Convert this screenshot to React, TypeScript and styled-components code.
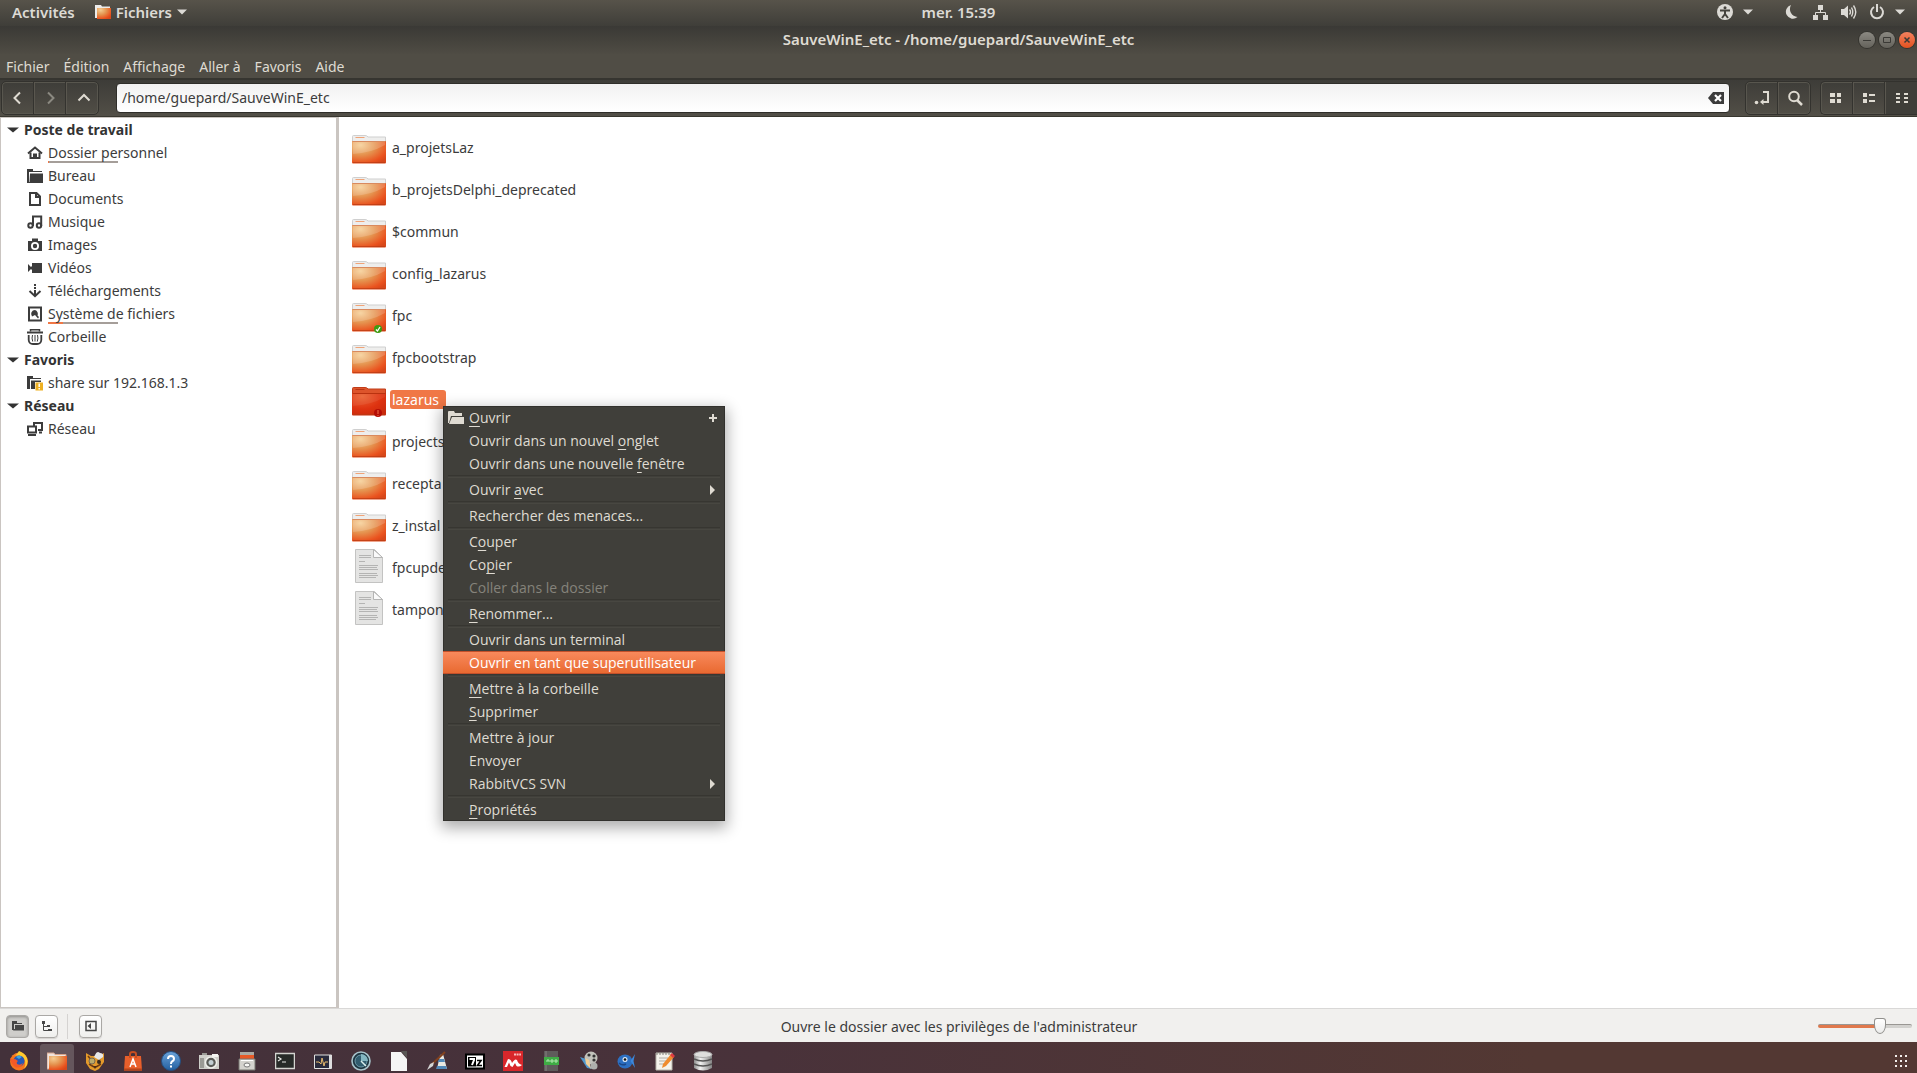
import React, { useState } from "react";
import styled, { createGlobalStyle, css } from "styled-components";

const Global = createGlobalStyle`
  * { box-sizing: border-box; }
  html, body, #root { height: 100%; margin: 0; }
  body {
    overflow: hidden;
    background: #fff;
    color: #3c3c3c;
    font: 14px/23px "Noto Sans", "Open Sans", sans-serif;
  }
  button, input { font: inherit; color: inherit; }
  button { margin: 0; padding: 0; border: 0; background: none; text-align: left; }
  svg { display: block; flex: none; }
  ul { list-style: none; margin: 0; padding: 0; }
`;

const Screen = styled.div`
  height: 100vh;
  display: flex;
  flex-direction: column;
`;

/* ---------- top panel ---------- */
const TopPanel = styled.header`
  height: 26px;
  flex: none;
  display: grid;
  grid-template-columns: 1fr auto 1fr;
  align-items: center;
  padding: 0 12px 2px;
  color: #dcdad5;
  background: linear-gradient(#57534a, #3f3e39);
`;
const PanelGroup = styled.div<{ $end?: boolean }>`
  display: flex;
  align-items: center;
  gap: ${(p) => (p.$end ? 32 : 20)}px;
  justify-content: ${(p) => (p.$end ? "flex-end" : "flex-start")};
`;
const PanelButton = styled.button<{ $gap?: number }>`
  display: flex;
  align-items: center;
  gap: ${(p) => p.$gap ?? 5}px;
  font-size: 15px;
  font-weight: 600;
`;
const Indicators = styled.span`
  display: flex;
  gap: 12px;
`;

/* ---------- window chrome ---------- */
const TitleBar = styled.div`
  height: 28px;
  flex: none;
  display: grid;
  grid-template-columns: 1fr auto 1fr;
  align-items: center;
  padding: 0 2px;
  color: #dfdbd2;
  background: linear-gradient(#3a3935, #4f4c44);
`;
const Title = styled.h1`
  grid-column: 2;
  margin: 0;
  padding-bottom: 2px;
  font-size: 15px;
  font-weight: 600;
`;
const WindowButtons = styled.div`
  display: flex;
  justify-content: flex-end;
  gap: 4px;
`;
const WindowButton = styled.button<{ $close?: boolean }>`
  width: 16px;
  height: 16px;
  border-radius: 8px;
  display: grid;
  place-items: center;
  color: #3b3a36;
  box-shadow: 0 0 0 1px #35342f;
  background: ${(p) => (p.$close ? "linear-gradient(#f4825f, #e2511f)" : "linear-gradient(#8c8a83, #64625b)")};
`;
const MenuBar = styled.nav`
  height: 24px;
  flex: none;
  display: flex;
  align-items: center;
  gap: 14px;
  padding: 0 6px;
  color: #dfdbd2;
  background: #504d45;
`;
const ToolBar = styled.div`
  height: 39px;
  flex: none;
  display: flex;
  align-items: center;
  padding: 0 0 1px 1px;
  border-top: 2px solid #363530;
  border-bottom: 1px solid #38372f;
  background: linear-gradient(#3d3c38, #524f47);
`;
const ToolGroup = styled.div<{ $open?: boolean }>`
  display: flex;
  height: 34px;
  border: 1px solid #33322e;
  border-radius: 5px;
  box-shadow: inset 0 0 0 1px #58564e;
  ${(p) => p.$open && css`border-right: 0; border-radius: 5px 0 0 5px;`}
`;
const ToolButton = styled.button<{ $active?: boolean }>`
  width: 32px;
  display: grid;
  place-items: center;
  color: #dfdbd2;
  background: ${(p) => (p.$active ? "#3f3e39" : "none")};
  & + & { border-left: 1px solid #5a574f; box-shadow: -1px 0 #34332f; }
  &:disabled { color: #8b8981; }
`;
const Location = styled.div`
  flex: 1;
  height: 30px;
  margin: 0 15px 0 17px;
  display: flex;
  align-items: center;
  padding: 0 5px;
  border: 1px solid #2f2e2a;
  border-radius: 4px;
  background: linear-gradient(#f1f1f1, #fff);
`;
const LocationInput = styled.input`
  flex: 1;
  min-width: 0;
  padding: 0;
  border: 0;
  outline: 0;
  background: none;
`;
const Spacer = styled.div`
  width: 9px;
`;

/* ---------- content ---------- */
const Content = styled.div`
  flex: 1;
  min-height: 0;
  display: flex;
`;
const SideBar = styled.aside`
  width: 339px;
  flex: none;
  border: solid #cac5c1;
  border-width: 1px 3px 1px 1px;
`;
const SectionButton = styled.button`
  width: 100%;
  height: 23px;
  display: flex;
  align-items: center;
  gap: 5px;
  padding-left: 6px;
  font-weight: 700;
  color: #333;
`;
const Place = styled.a`
  height: 23px;
  display: flex;
  align-items: center;
  gap: 5px;
  padding-left: 26px;
  color: #3c3c3c;
  text-decoration: none;
`;
const PlaceLabel = styled.span<{ $used?: number }>`
  ${(p) =>
    p.$used !== undefined &&
    css`
      background: linear-gradient(90deg, #f07746 ${p.$used}px, #a59e99 ${p.$used}px) left 0 bottom 1px / 70px 2px no-repeat;
    `}
`;
const Files = styled.main`
  flex: 1;
  padding: 9px 13px;
`;
const FileRow = styled.li`
  height: 42px;
  display: flex;
  align-items: center;
  gap: 4px;
`;
const FileLabel = styled.button<{ $selected?: boolean }>`
  line-height: 19px;
  padding: 0 7px 0 2px;
  border-radius: 3px;
  ${(p) => p.$selected && css`background: #f07746; color: #fff;`}
`;

/* ---------- context menu ---------- */
const ContextMenu = styled.ul`
  position: absolute;
  left: 443px;
  top: 406px;
  width: 282px;
  font-family: "Open Sans", "Noto Sans", sans-serif;
  color: #dfdbd2;
  background: #403f3a;
  box-shadow: inset 0 0 0 1px #32312d, 0 5px 14px 2px rgba(0, 0, 0, 0.32);
`;
const MenuItem = styled.button<{ $active?: boolean }>`
  width: 100%;
  height: 23px;
  display: grid;
  grid-template-columns: 16px 1fr auto;
  align-items: center;
  gap: 5px;
  padding: 0 8px 0 5px;
  u { text-underline-offset: 3px; }
  &:disabled { color: #85837b; }
  ${(p) =>
    p.$active &&
    css`
      color: #fff;
      background: linear-gradient(#f98b5e, #e8682f);
      box-shadow: inset 0 1px #c3502a, inset 0 -1px #c3502a;
    `}
`;
const MenuLine = styled.li`
  height: 3px;
  margin: 0 5px;
  border-top: 1px solid #373631;
  border-bottom: 1px solid #484741;
`;

/* ---------- status bar ---------- */
const StatusBar = styled.footer`
  height: 34px;
  flex: none;
  display: grid;
  grid-template-columns: 1fr auto 1fr;
  align-items: center;
  padding: 1px 5px 0 6px;
  border-top: 1px solid #d9d8d7;
  background: #f1f0ee;
`;
const StatusTools = styled.div`
  display: flex;
  align-items: center;
  gap: 6px;
`;
const StatusButton = styled.button<{ $pressed?: boolean }>`
  width: 23px;
  height: 23px;
  display: grid;
  place-items: center;
  border: 1px solid #aaa8a5;
  border-radius: 4px;
  color: #464646;
  background: ${(p) => (p.$pressed ? "#cfcecb" : "linear-gradient(#fff, #efefed)")};
  box-shadow: ${(p) => (p.$pressed ? "inset 0 1px 3px #8d8c89" : "0 1px 1px #d4d2d0")};
`;
const StatusDivider = styled.div`
  width: 1px;
  height: 25px;
  margin: 0 5px 0 3px;
  background: #d5d3d1;
`;
const Zoom = styled.input`
  appearance: none;
  justify-self: end;
  width: 94px;
  height: 18px;
  margin: 0;
  background: none;
  &::-webkit-slider-runnable-track {
    height: 4px;
    border-radius: 2px;
    border-top: 1px solid #999793;
    background: linear-gradient(90deg, #e0784c 65%, #d2d1ce 65%);
  }
  &::-webkit-slider-thumb {
    appearance: none;
    width: 12px;
    height: 16px;
    margin-top: -7px;
    border: 1px solid #91908d;
    border-radius: 3px 3px 6px 6px / 3px 3px 9px 9px;
    background: linear-gradient(#fff, #ececeb);
  }
`;

/* ---------- dock ---------- */
const Dock = styled.nav`
  height: 31px;
  flex: none;
  display: flex;
  align-items: stretch;
  gap: 4px;
  padding: 2px 8px 0 2px;
  background: linear-gradient(90deg, #43313a, #49323a 40%, #533833 80%, #533833);
`;
const DockButton = styled.button<{ $active?: boolean; $last?: boolean }>`
  width: ${(p) => (p.$last ? 16 : 34)}px;
  margin-left: ${(p) => (p.$last ? "auto" : 0)};
  display: grid;
  place-items: center;
  padding-top: 4px;
  border-radius: 3px 3px 0 0;
  background: ${(p) => (p.$active ? "#65565c" : "none")};
`;

/* ---------- drawings ---------- */
const Caret = ({ w = 10 }: { w?: number }) => (
  <svg width={w} height="6" viewBox="0 0 10 6" preserveAspectRatio="none">
    <path d="M0 0.5H10L5 5.5Z" fill="currentColor" />
  </svg>
);

const SharedGradients = () => (
  <svg width="0" height="0" style={{ position: "absolute" }} aria-hidden="true">
    <defs>
      <radialGradient id="folder" cx="0.25" cy="0.18" r="0.95">
        <stop offset="0" stopColor="#f5cd92" />
        <stop offset="0.45" stopColor="#e59450" />
        <stop offset="0.85" stopColor="#ea521e" />
        <stop offset="1" stopColor="#d8481a" />
      </radialGradient>
      <radialGradient id="folderRed" cx="0.3" cy="0.15" r="0.95">
        <stop offset="0" stopColor="#ea6232" />
        <stop offset="0.6" stopColor="#de3210" />
        <stop offset="1" stopColor="#c82a0d" />
      </radialGradient>
      <linearGradient id="metal" x1="0" x2="1">
        <stop offset="0" stopColor="#8d8d8d" />
        <stop offset="0.35" stopColor="#f2f2f2" />
        <stop offset="1" stopColor="#858585" />
      </linearGradient>
      <linearGradient id="blue" x1="0" y1="0" x2="0" y2="1">
        <stop offset="0" stopColor="#6ba3da" />
        <stop offset="1" stopColor="#235f9f" />
      </linearGradient>
    </defs>
  </svg>
);

type Badge = "ok" | "alert";
const FolderIcon = ({ badge }: { badge?: Badge }) => {
  const red = badge === "alert";
  return (
    <svg width="34" height="36" viewBox="0 -6 34 36">
      <path d="M.5 8V1.5Q.5.5 1.5.5H13Q15 .5 16 2H33.5V8Z" fill={red ? "#dd542b" : "#eeeeed"} stroke={red ? "#c13c19" : "#cfcfcf"} />
      <path d="M3.500 2.500H12.500" stroke={red ? "#b93312" : "#f0a377"} />
      <path d="M0 6H34V27.500Q34 28.500 33 28.500H1Q0 28.500 0 27.500Z" fill={red ? "url(#folderRed)" : "url(#folder)"} />
      <path d="M1 7H33V10Q19 18 1 19Z" fill="#fff" opacity={red ? 0.07 : 0.17} />
      <path d="M1 27.500H33" stroke="#b83b14" opacity="0.7" />
      <path d="M.5 6.500H33.500" stroke={red ? "#b9320f" : "#d98a5f"} />
      {badge === "ok" && (
        <>
          <circle cx="26" cy="26" r="4" fill="#3f9b12" />
          <path d="M24 26.500L25.500 28L28 24" stroke="#fff" strokeWidth="1.300" fill="none" />
        </>
      )}
      {badge === "alert" && (
        <>
          <circle cx="26" cy="26" r="4" fill="#b50d05" />
          <path d="M26 23V27M26 28V29" stroke="#e66040" strokeWidth="1.200" />
        </>
      )}
    </svg>
  );
};

const TextFileIcon = () => (
  <svg width="34" height="36" viewBox="0 0 34 36">
    <path d="M3.500.5H22.500L30.500 8.500V33.500H3.500Z" fill="#e4e4e3" stroke="#c3c3c2" />
    <path d="M21.500.5V8.500H30.500Z" fill="#fafafa" stroke="#b5b5b4" />
    <path d="M7 6.500H19M7 8.500H19M7 12.500H13M7 16.500H26M7 18.500H25M7 20.500H26M7 24.500H25M7 26.500H26M7 28.500H24" stroke="#b4b4b3" />
  </svg>
);

const Ico = ({ children }: { children: React.ReactNode }) => (
  <svg width="16" height="16" viewBox="0 0 16 16" fill="currentColor">{children}</svg>
);
const line = { fill: "none", stroke: "currentColor", strokeWidth: 2 };

const placeIcons: Record<string, React.ReactNode> = {
  home: <><path d="M1 8.500L8 2.500L15 8.500" {...line} /><path d="M3.500 7.500V13H7V9.500H9V13H12.500V7.500" {...line} /></>,
  folder: <><path d="M0 1H6V3H15V4H0Z" /><path d="M0 1H2V15H0ZM3 5.500H16V15H0V14H2.500Z" /></>,
  doc: <path d="M3 2H9.500L13 5.500V14H3ZM9 2V6H13" {...line} />,
  music: <><circle cx="3.500" cy="11.500" r="2.200" {...line} /><circle cx="12" cy="11.500" r="2.200" {...line} /><path d="M6 12V2.500H14.200V12" {...line} /></>,
  camera: <path fillRule="evenodd" d="M5 1.500H11V4H15V14H1V4H5ZM8 5A4 4 0 1 0 8 13A4 4 0 1 0 8 5ZM8 6.800A2.200 2.200 0 1 1 8 11.200A2.200 2.200 0 1 1 8 6.800Z" />,
  video: <path d="M5 3H15V13H5V10L4 9L1 12V4L4 7L5 6Z" />,
  down: <><path d="M8 1V3M8 4V6M8 7V12" {...line} /><path d="M2.500 8L8 13.200L13.500 8" {...line} /></>,
  disk: <><path d="M2 1.500H14V14.500H2Z" {...line} /><path d="M8 4A4 4 0 0 0 5 10.500L8 9L11 12.500L12 11L10.500 9.500A4 4 0 0 0 8 4Z" /></>,
  trash: <><path d="M3.500 2.500V.8H12.500V2.500" {...line} strokeWidth={1.5} /><path d="M0 3.500H16" {...line} /><path d="M1.700 6V11Q2 15 6 15H10Q14 15 14.300 11V6" {...line} strokeWidth={1.8} /><path d="M5.500 6Q4.500 9 5.700 12.500M8 6V12.500M10.500 6Q11.500 9 10.300 12.500" {...line} strokeWidth={1} /></>,
  share: <><path d="M0 1H6V3H14V4H3V14H0Z" /><path d="M4 5.500H14V7H8V14H4Z" /><path d="M8.500 7.500H16V15.500H8.500Z" fill="#eeb021" /><path d="M12.200 8.500V12M12.200 13V14.500" stroke="#fff" strokeWidth="1.500" /></>,
  network: <><path d="M7 5V2H15V9H11" {...line} /><path d="M1 5.500H9V11.500H1ZM1 14H9M12 11.500H15" {...line} /></>,
};

/* ---------- data ---------- */
type PlaceData = { name: string; icon: string; used?: number };
const sections: { name: string; places: PlaceData[] }[] = [
  {
    name: "Poste de travail",
    places: [
      { name: "Dossier personnel", icon: "home", used: 1 },
      { name: "Bureau", icon: "folder" },
      { name: "Documents", icon: "doc" },
      { name: "Musique", icon: "music" },
      { name: "Images", icon: "camera" },
      { name: "Vidéos", icon: "video" },
      { name: "Téléchargements", icon: "down" },
      { name: "Système de fichiers", icon: "disk", used: 15 },
      { name: "Corbeille", icon: "trash" },
    ],
  },
  { name: "Favoris", places: [{ name: "share sur 192.168.1.3", icon: "share" }] },
  { name: "Réseau", places: [{ name: "Réseau", icon: "network" }] },
];

const files: { name: string; text?: boolean; badge?: Badge; selected?: boolean }[] = [
  { name: "a_projetsLaz" },
  { name: "b_projetsDelphi_deprecated" },
  { name: "$commun" },
  { name: "config_lazarus" },
  { name: "fpc", badge: "ok" },
  { name: "fpcbootstrap" },
  { name: "lazarus", badge: "alert", selected: true },
  { name: "projects" },
  { name: "recepta" },
  { name: "z_instal" },
  { name: "fpcupde", text: true },
  { name: "tampon", text: true },
];

/* An underscore goes before the letter that is the shortcut; null is a separator. */
type Entry = { label: string; kind?: "open" | "sub"; active?: boolean; disabled?: boolean } | null;
const entries: Entry[] = [
  { label: "_Ouvrir", kind: "open" },
  { label: "Ouvrir dans un nouvel _onglet" },
  { label: "Ouvrir dans une nouvelle _fenêtre" },
  null,
  { label: "Ouvrir _avec", kind: "sub" },
  null,
  { label: "Rechercher des menaces..." },
  null,
  { label: "C_ouper" },
  { label: "Co_pier" },
  { label: "Coller dans le dossier", disabled: true },
  null,
  { label: "_Renommer..." },
  null,
  { label: "Ouvrir dans un terminal" },
  { label: "Ouvrir en tant que superutilisateur", active: true },
  null,
  { label: "_Mettre à la corbeille" },
  { label: "_Supprimer" },
  null,
  { label: "Mettre à jour" },
  { label: "Envoyer" },
  { label: "RabbitVCS SVN", kind: "sub" },
  null,
  { label: "_Propriétés" },
];

const Mnemonic = ({ text }: { text: string }) => {
  const at = text.indexOf("_");
  if (at < 0) return <span>{text}</span>;
  return <span>{text.slice(0, at)}<u>{text[at + 1]}</u>{text.slice(at + 2)}</span>;
};

const dockApps: { name: string; art: React.ReactNode }[] = [
  { name: "Firefox", art: <><circle cx="10" cy="10.500" r="9" fill="#f5741c" /><path d="M3 4Q6 5 8 3L10 0Q16 2 18 7Q20 13 15 18Q19 9 12 5Z" fill="#ffcb2f" /><circle cx="10" cy="10" r="5.500" fill="#2859b5" /><path d="M1 7Q3 9 6 8L9 10Q7 11 8 13Q11 15 14 12Q12 18 6 16Q2 13 1 7Z" fill="#f35a27" /><path d="M7 6Q10 3 13 6L10 8Z" fill="#3ba4df" /></> },
  { name: "Fichiers", art: <><path d="M0 2H7L8 3.500H19V18H0Z" fill="#f0e5de" stroke="#d6a48b" /><path d="M2 5H20V19H2Z" fill="url(#folder)" /></> },
  { name: "Chat", art: <><path d="M1 2L6 5H14L19 2V11L14 18L10 20L5 18L1 12Z" fill="#e49a2b" /><path d="M3 5L7 10M17 5L13 10M4 13L9 16M16 13L11 16" stroke="#6f3c12" strokeWidth="1.500" /><path d="M10 4Q12-1 15 2Q19 2 18 6L14 9L9 6Z" fill="#e8e8e8" /><circle cx="7" cy="10" r="3" fill="#b9a96a" stroke="#746854" /><circle cx="14" cy="11" r="2" fill="#382b21" /><path d="M8 15H12L10 18Z" fill="#4a2a15" /></> },
  { name: "Logiciels", art: <><path d="M2 5H18L19 19.500H1Z" fill="#e95f2b" /><path d="M7 7V3Q7 1 10 1T13 3V7" fill="none" stroke="#c84e20" strokeWidth="2" /><path d="M1 18.500H19" stroke="#b7441a" strokeWidth="2" /><path d="M7 16L10 8L13 16M8 13H12" fill="none" stroke="#fff" strokeWidth="1.500" /></> },
  { name: "Aide", art: <><circle cx="10" cy="10" r="9.500" fill="url(#blue)" stroke="#254f80" /><path d="M7 8Q7 5 10 5T13 8Q13 9.500 11 10.500Q10 11 10 13M10 14.500V16.500" fill="none" stroke="#fff" strokeWidth="2" /></> },
  { name: "Capture", art: <><path d="M0 4H20V18H0Z" fill="#cfcfca" /><path d="M3 2H8V4H3ZM1 7H5V17H1Z" fill="#9a9a95" /><path d="M13 3H19V6H13Z" fill="#f4f4f1" /><circle cx="12" cy="11.500" r="5.500" fill="#5a5b57" stroke="#efefeb" strokeWidth="1.500" /><circle cx="12" cy="11.500" r="2.500" fill="#c3cfd3" /></> },
  { name: "Archives", art: <><path d="M3 1H17V8H3Z" fill="#a9a9a3" /><path d="M3 4H17V8H3Z" fill="#e85926" /><path d="M2 8H18V19H2Z" fill="#d4d3ce" stroke="#777670" /><path d="M4 9H16V10H4Z" fill="#fff" /><ellipse cx="10" cy="14" rx="3" ry="2" fill="#f8f8f5" stroke="#777" /></> },
  { name: "Terminal", art: <><path d="M.5 2.500H19.500V17.500H.5Z" fill="#272a28" stroke="#d4d4d0" strokeWidth="1.500" /><path d="M3 6L6 8L3 10M7 11H11" fill="none" stroke="#e8e8e5" strokeWidth="1.200" /></> },
  { name: "Moniteur", art: <><path d="M1.500 4H18.500V17.500H1.500Z" fill="#292a3b" stroke="#e0e0df" /><path d="M16 4H19V17H16Z" fill="#dedede" /><path d="M3 11H6L8 13L9 7L11 15L12 11H15" fill="none" stroke="#e7ba6d" /></> },
  { name: "Disques", art: <><circle cx="10" cy="10" r="9" fill="#1d3541" stroke="#a7c3cb" strokeWidth="1.600" /><circle cx="10" cy="10" r="6" fill="#315c6e" stroke="#6e9baa" /><path d="M10 10V3A7 7 0 0 1 17 10Z" fill="#83b6c1" /><path d="M10 10L15 15" stroke="#d8eceb" strokeWidth="1.500" /></> },
  { name: "Document", art: <><path d="M2 1H12L18 8V20H2Z" fill="#f5f5f5" /><path d="M12 0H18V7Z" fill="#5a5755" /></> },
  { name: "Dessin", art: <><path d="M13 4L16 3L20 18H10Z" fill="#e9e9e2" /><path d="M12 8H17L18 11H11ZM10 15H19L20 18H9Z" fill="#5289b8" /><path d="M3 15L18 1" stroke="#82411d" strokeWidth="2" /><path d="M0 19L3 13L7 11L6 15Z" fill="#d3d5d5" /></> },
  { name: "7-Zip", art: <><path d="M1 3.500H19V17.500H1Z" fill="#fff" stroke="#000" strokeWidth="2" /><path d="M3 6H11V15.500H3Z" fill="#000" /><path d="M4.500 8H9V9L7 14" fill="none" stroke="#fff" strokeWidth="2" /><path d="M12 9.500H16L12.500 14.500H17" fill="none" stroke="#000" strokeWidth="1.600" /></> },
  { name: "PDF", art: <><path d="M0 0H20V20H0Z" fill="#d8272b" /><path d="M1.500 16L5 8Q8 8 9 12Q12 7 14 9Q15 13 19 14Q16 16.500 13.500 15L12 12L9.500 16L7.500 15L6 11.500L4 16Z" fill="#fff" /><path d="M11 3.500H18" stroke="#f7bcbc" strokeWidth="2" strokeDasharray="2 .6" /></> },
  { name: "Nextion", art: <><path d="M3 0H17V20H3Z" fill="#5f5b5b" /><path d="M5 0V20" stroke="#878181" /><path d="M3 6H18V14H3Z" fill="#3fac45" /><path d="M6 11V9H8V11M10 9H12V11H10ZM14 9H16V11H14Z" fill="none" stroke="#b6e9b4" /></> },
  { name: "Vidéo", art: <><circle cx="12" cy="7" r="6.500" fill="#c2c2bb" /><circle cx="10" cy="4" r="1.600" fill="#333" /><circle cx="15" cy="5" r="1.600" fill="#333" /><circle cx="15" cy="9" r="1.600" fill="#333" /><path d="M1 6L7 8L13 18L8 17Z" fill="#5298cf" /><path d="M6 7L10 9L12 18L7 13Z" fill="#f1cf99" /><circle cx="15" cy="15" r="3.500" fill="#aeb0ad" /></> },
  { name: "Poisson", art: <><ellipse cx="8" cy="10.500" rx="7.500" ry="7" fill="#2d6fc1" /><path d="M13.500 10L18 3L16.500 10L18 17Z" fill="#3c87db" /><circle cx="8" cy="8.500" r="2.500" fill="#dfe9f5" /><circle cx="8" cy="8.500" r="1.300" fill="#111" /><path d="M2 12Q5 15 9 13" fill="none" stroke="#1b4787" strokeWidth="1.500" /></> },
  { name: "Notes", art: <><path d="M1 2H17V19H1Z" fill="#f4f3ec" stroke="#b7b5ab" /><path d="M2 1V4M5 1V4M8 1V4M11 1V4M14 1V4" stroke="#83817b" /><path d="M4 7H13M4 10H11M4 13H9" stroke="#b0aea7" /><path d="M8 13L16 3L19 6L11 15L7 17Z" fill="#ef8c2e" /><path d="M15 4L17 2L20 5L18 7Z" fill="#dc3b42" /></> },
  { name: "Base de données", art: <><path d="M1 4V17Q10 22 19 17V4Z" fill="url(#metal)" /><ellipse cx="10" cy="3.500" rx="9" ry="3" fill="#dededd" stroke="#aaa" /><path d="M1 8Q10 12 19 8M1 13Q10 17 19 13" fill="none" stroke="#555" strokeWidth="1.500" /></> },
];

export default function App() {
  const [path, setPath] = useState("/home/guepard/SauveWinE_etc");
  const [zoom, setZoom] = useState(68);
  return (
    <Screen>
      <Global />
      <SharedGradients />
      <TopPanel>
        <PanelGroup>
          <PanelButton>Activités</PanelButton>
          <PanelButton>
            <svg width="16" height="16" viewBox="0 0 16 16">
              <path d="M0 1H6L7 2.500H15V14H0Z" fill="#ecebea" />
              <path d="M2 4H16V15H2Z" fill="url(#folder)" />
            </svg>
            Fichiers
            <Caret />
          </PanelButton>
        </PanelGroup>
        <PanelButton>mer. 15:39</PanelButton>
        <PanelGroup $end>
          <PanelButton $gap={10} aria-label="Accessibilité">
            <Ico>
              <circle cx="8" cy="8" r="8" />
              <circle cx="8" cy="3.800" r="1.500" fill="#45433d" />
              <path d="M3 6.500H13M8 6V10L5 14M8 10L11 14" stroke="#45433d" strokeWidth="2" fill="none" />
            </Ico>
            <Caret />
          </PanelButton>
          <PanelButton $gap={10} aria-label="Système">
            <Indicators>
              <Ico><path d="M6 1A7 7 0 1 0 12.500 13A8 8 0 0 1 6 1Z" /></Ico>
              <Ico>
                <path d="M5 1H10V6H5ZM0 11H5V16H0ZM10 11H15V16H10Z" />
                <path d="M7.500 6V8.500M2.500 11V8.500H12.500V11" {...line} strokeWidth={1} />
              </Ico>
              <Ico>
                <path d="M0 5H3L7 1.500V14.500L3 11H0Z" />
                <path d="M8.500 5.500Q10.500 8 8.500 10.500M10.500 3.500Q13 8 10.500 12.500M12.500 1.500Q17 8 12.500 14.500" {...line} strokeWidth={1.4} />
              </Ico>
              <Ico>
                <path d="M5 3A6 6 0 1 0 11 3" {...line} />
                <path d="M8 0V8" {...line} />
              </Ico>
            </Indicators>
            <Caret />
          </PanelButton>
        </PanelGroup>
      </TopPanel>

      <TitleBar>
        <Title>SauveWinE_etc - /home/guepard/SauveWinE_etc</Title>
        <WindowButtons>
          <WindowButton aria-label="Réduire"><svg width="8" height="8"><path d="M0 4.500H8" stroke="currentColor" /></svg></WindowButton>
          <WindowButton aria-label="Agrandir"><svg width="8" height="8"><path d="M.5 1.500H7.500V6.500H.5Z" fill="none" stroke="currentColor" /></svg></WindowButton>
          <WindowButton aria-label="Fermer" $close><svg width="8" height="8"><path d="M1.500 1.500L6.500 6.500M6.500 1.500L1.500 6.500" stroke="currentColor" strokeWidth="1.500" /></svg></WindowButton>
        </WindowButtons>
      </TitleBar>
      <MenuBar>
        {["Fichier", "Édition", "Affichage", "Aller à", "Favoris", "Aide"].map((m) => <button key={m}>{m}</button>)}
      </MenuBar>
      <ToolBar>
        <ToolGroup>
          <ToolButton aria-label="Précédent"><Ico><path d="M10 2.500L4.500 8L10 13.500" {...line} /></Ico></ToolButton>
          <ToolButton aria-label="Suivant" disabled><Ico><path d="M5 2.500L10.500 8L5 13.500" {...line} /></Ico></ToolButton>
          <ToolButton aria-label="Dossier parent"><Ico><path d="M3.500 10.500L9 5L14.500 10.500" {...line} /></Ico></ToolButton>
        </ToolGroup>
        <Location>
          <LocationInput aria-label="Emplacement" value={path} onChange={(e) => setPath(e.target.value)} />
          <button aria-label="Effacer" onClick={() => setPath("")}>
            <Ico>
              <path d="M0 8L5 2H16V14H5Z" />
              <path d="M7 5L13 11M13 5L7 11" stroke="#fff" strokeWidth="2.200" />
            </Ico>
          </button>
        </Location>
        <ToolGroup>
          <ToolButton aria-label="Basculer l'emplacement">
            <Ico>
              <circle cx="2.500" cy="12.500" r="1.800" />
              <path d="M9 2H14V12H8" {...line} />
              <path d="M6 12L9.500 9V15Z" />
            </Ico>
          </ToolButton>
          <ToolButton aria-label="Rechercher">
            <Ico>
              <circle cx="7" cy="6.500" r="4.800" {...line} />
              <path d="M10 10L15 15" {...line} strokeWidth={2.5} />
            </Ico>
          </ToolButton>
        </ToolGroup>
        <Spacer />
        <ToolGroup $open>
          <ToolButton aria-label="Icônes"><Ico><path d="M1 3H6V7H1ZM8 3H12V7H8ZM1 9H6V13H1ZM8 9H12V13H8Z" /></Ico></ToolButton>
          <ToolButton aria-label="Liste"><Ico><path d="M1 3H5V7H1ZM7 4H13V6H7ZM1 9H5V13H1ZM7 10H13V12H7Z" /></Ico></ToolButton>
          <ToolButton aria-label="Compact" $active><Ico><path d="M2 3H6V5H2ZM2 7H6V9H2ZM2 11H6V13H2ZM10 3H14V5H10ZM10 7H14V9H10ZM10 11H14V13H10Z" /></Ico></ToolButton>
        </ToolGroup>
      </ToolBar>

      <Content>
        <SideBar>
          {sections.map((s) => (
            <React.Fragment key={s.name}>
              <SectionButton><Caret w={12} />{s.name}</SectionButton>
              {s.places.map((p) => (
                <Place key={p.name} href="#">
                  <Ico>{placeIcons[p.icon]}</Ico>
                  <PlaceLabel $used={p.used}>{p.name}</PlaceLabel>
                </Place>
              ))}
            </React.Fragment>
          ))}
        </SideBar>
        <Files>
          <ul>
            {files.map((f) => (
              <FileRow key={f.name}>
                {f.text ? <TextFileIcon /> : <FolderIcon badge={f.badge} />}
                <FileLabel $selected={f.selected}>{f.name}</FileLabel>
              </FileRow>
            ))}
          </ul>
        </Files>
      </Content>

      <StatusBar>
        <StatusTools>
          <StatusButton $pressed aria-label="Emplacements">
            <svg width="12" height="12" viewBox="0 0 12 12" fill="currentColor"><path d="M0 1H5V3H10V4H2V10H0Z" /><path d="M3 5H12V10.500H1L2 9H3Z" /></svg>
          </StatusButton>
          <StatusButton aria-label="Arborescence">
            <svg width="12" height="12" viewBox="0 0 12 12" fill="currentColor"><path d="M1 1H4V4H1Z" /><path d="M2.500 3V10.500H7M2.500 6.500H6" fill="none" stroke="currentColor" /><path d="M6 5H9V7H6ZM7 9H11V11H7Z" /></svg>
          </StatusButton>
          <StatusDivider />
          <StatusButton aria-label="Masquer le volet">
            <svg width="12" height="12" viewBox="0 0 12 12" fill="currentColor"><path d="M1 1.500H11V10.500H1Z" fill="none" stroke="currentColor" strokeWidth="1.500" /><path d="M6 3V9L2.500 6Z" /></svg>
          </StatusButton>
        </StatusTools>
        <span>Ouvre le dossier avec les privilèges de l'administrateur</span>
        <Zoom type="range" aria-label="Zoom" min={0} max={100} value={zoom} onChange={(e) => setZoom(Number(e.target.value))} />
      </StatusBar>

      <Dock>
        {dockApps.map((a) => (
          <DockButton key={a.name} aria-label={a.name} $active={a.name === "Fichiers"}>
            <svg width="20" height="20" viewBox="0 0 20 20">{a.art}</svg>
          </DockButton>
        ))}
        <DockButton $last aria-label="Applications">
          <svg width="12" height="12" viewBox="0 0 12 12" fill="#f2eeec">
            <path d="M0 0H2V2H0ZM5 0H7V2H5ZM10 0H12V2H10ZM0 5H2V7H0ZM5 5H7V7H5ZM10 5H12V7H10ZM0 10H2V12H0ZM5 10H7V12H5ZM10 10H12V12H10Z" />
          </svg>
        </DockButton>
      </Dock>

      <ContextMenu>
        {entries.map((e, i) =>
          e === null ? (
            <MenuLine key={i} />
          ) : (
            <li key={i}>
              <MenuItem $active={e.active} disabled={e.disabled}>
                {e.kind === "open" ? <Ico><path d="M0 2Q0 1 1 1H6L7 3H14V6H3L1 13H0Z" /><path d="M4 7H16V14H1Z" /></Ico> : <span />}
                <Mnemonic text={e.label} />
                {e.kind === "open" && <svg width="8" height="8"><path d="M4 0V8M0 4H8" stroke="currentColor" strokeWidth="2" /></svg>}
                {e.kind === "sub" && <svg width="8" height="10"><path d="M1 0L6 5L1 10Z" fill="currentColor" /></svg>}
              </MenuItem>
            </li>
          )
        )}
      </ContextMenu>
    </Screen>
  );
}
